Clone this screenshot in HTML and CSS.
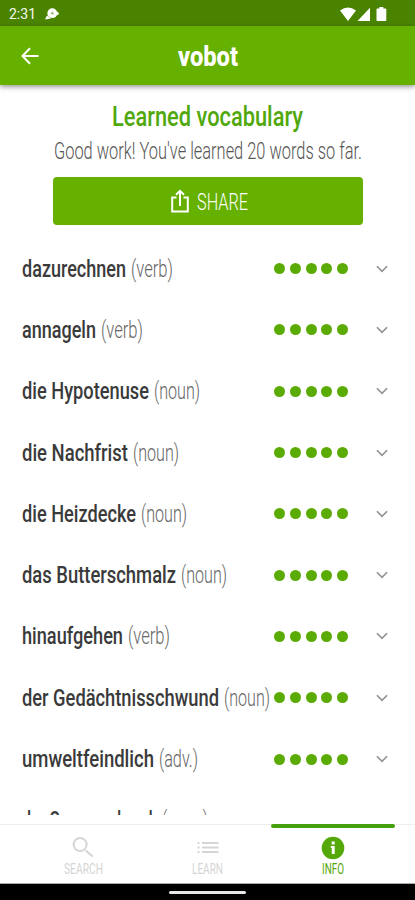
FILE: index.html
```html
<!DOCTYPE html>
<html lang="en">
<head>
    <meta charset="UTF-8">
    <meta name="viewport" content="width=device-width, initial-scale=1.0">
    <title>vobot</title>
    <link rel="stylesheet" href="styles.css">
</head>
<body>
    <div class="status-bar">
        <span class="clock">2:31</span>
        <svg class="notification" width="14" height="12" viewBox="0 0 14 12">
            <circle cx="7.300" cy="5.200" r="4.900"/>
            <circle cx="12" cy="5.500" r="1.800"/>
            <path d="M0 11.500 2 7.500l4 3z"/>
            <path class="notification-mark" d="M7.300 3.700v3M5.800 5.200h3"/>
        </svg>
        <svg class="signals" width="48" height="15" viewBox="0 0 48 15">
            <path d="M0 3.600Q8 -2.600 16 3.600L8 14z"/>
            <path d="M30 .8V14H17.500z"/>
            <path d="M39.300 0h4v1.500h2.200q.8 0 .8.800V13.200q0 .8-.8.800h-8.200q-.8 0-.8-.8V2.300q0-.8.8-.8h2z"/>
        </svg>
    </div>

    <header class="app-bar">
        <svg class="back" width="18" height="18" viewBox="0 0 18 18">
            <path d="M17.500 9H1.800M9 1.300 1.500 9 9 16.700"/>
        </svg>
        <svg class="line title" width="60" height="36">
            <text x="0" y="28" textLength="60" lengthAdjust="spacingAndGlyphs">vobot</text>
        </svg>
    </header>

    <main class="content">
        <svg class="line heading" width="192" height="34">
            <text x="0" y="26" textLength="191" lengthAdjust="spacingAndGlyphs">Learned vocabulary</text>
        </svg>
        <svg class="line summary" width="308" height="30">
            <text x="0" y="22" textLength="308" lengthAdjust="spacingAndGlyphs">Good work! You've learned 20 words so far.</text>
        </svg>
        <button class="share">
            <svg class="share-icon" width="18" height="24" viewBox="0 0 18 24">
                <path d="M5.500 8.500H1.200V22.500H16.800V8.500H12.500M9 17V2M5 5.800 9 1.800 13 5.800"/>
            </svg>
            <svg class="line share-label" width="51" height="30">
                <text x="0" y="24" textLength="51" lengthAdjust="spacingAndGlyphs">SHARE</text>
            </svg>
        </button>
        <ul class="word-list" id="word-list"></ul>
    </main>

    <nav class="tabs">
        <a class="tab">
            <svg class="tab-icon" width="24" height="24" viewBox="0 0 24 24">
                <path class="stroke" d="M14.500 14.500 21.800 20.500M15.600 8.500a6.500 6.500 0 1 1-13 0a6.500 6.500 0 1 1 13 0"/>
            </svg>
            <svg class="line tab-label" width="39" height="18">
                <text x="0" y="14" textLength="39" lengthAdjust="spacingAndGlyphs">SEARCH</text>
            </svg>
        </a>
        <a class="tab">
            <svg class="tab-icon" width="24" height="24" viewBox="0 0 24 24">
                <path d="M1.500 6h2v2h-2zM1.500 10.500h2v2h-2zM1.500 15h2v2h-2zM6 6h16.500v2H6zM6 10.500h16.500v2H6zM6 15h16.500v2H6z"/>
            </svg>
            <svg class="line tab-label" width="31" height="18">
                <text x="0" y="14" textLength="31" lengthAdjust="spacingAndGlyphs">LEARN</text>
            </svg>
        </a>
        <a class="tab active">
            <svg class="tab-icon" width="24" height="24" viewBox="0 0 24 24">
                <circle cx="12" cy="12" r="11.300"/>
                <path class="info-mark" d="M10.700 5.500h3v3h-3zM9.800 10h3.900v8h-2.900v-6h-1z"/>
            </svg>
            <svg class="line tab-label" width="22" height="18">
                <text x="0" y="14" textLength="22" lengthAdjust="spacingAndGlyphs">INFO</text>
            </svg>
        </a>
    </nav>

    <div class="system-bar"><span class="handle"></span></div>

    <script src="words.js"></script>
</body>
</html>
```
FILE: styles.css
```css
* {
    box-sizing: border-box;
}

body {
    margin: 0;
    height: 900px;
    display: flex;
    flex-direction: column;
    overflow: hidden;
    font-family: Roboto, sans-serif;
    background-color: #fff;
}

svg {
    display: block;
    flex: none;
}

.line {
    overflow: visible;
}

.status-bar {
    flex: none;
    height: 26px;
    display: flex;
    align-items: center;
    padding: 2px 27px 0 9px;
    background-color: #4a8300;
    color: #f4f8ee;
    fill: #fff;
}

.clock {
    width: 36px;
    font-size: 14px;
}

.notification-mark {
    stroke: #8fb35f;
    stroke-width: 1;
}

.signals {
    margin-left: auto;
}

.app-bar {
    flex: none;
    height: 59px;
    display: grid;
    grid-template-columns: 1fr auto 1fr;
    align-items: center;
    padding: 0 21px;
    background-color: #66b000;
    box-shadow: 0 2px 5px rgba(0, 0, 0, 0.4);
    z-index: 1;
}

.back {
    fill: none;
    stroke: #fff;
    stroke-width: 2;
}

.title {
    font-size: 28px;
    font-weight: 800;
    fill: #fff;
}

.content {
    flex: 1;
    min-height: 0;
    margin-bottom: 9px;
    overflow: hidden;
    display: flex;
    flex-direction: column;
    align-items: center;
    padding-top: 15px;
}

.heading {
    font-size: 28px;
    font-weight: 500;
    fill: #50a80c;
}

.summary {
    margin-top: 3px;
    font-size: 23px;
    font-weight: 300;
    fill: #555;
}

.share {
    flex: none;
    width: 310px;
    height: 48px;
    margin-top: 10px;
    padding: 0 0 0 3px;
    display: flex;
    align-items: center;
    justify-content: center;
    gap: 8px;
    border: 0;
    border-radius: 4px;
    background-color: #66b000;
}

.share-icon {
    fill: none;
    stroke: #fff;
    stroke-width: 2;
}

.share-label {
    font-size: 24px;
    font-family: Roboto, sans-serif;
    font-weight: 300;
    fill: #fff;
}

.word-list {
    width: 100%;
    margin: 13px 0 0;
    padding: 0;
    list-style-type: none;
}

.word-row {
    height: 61.3px;
    display: grid;
    grid-template-columns: 252px 74px 1fr;
    align-items: center;
    padding: 0 27px 0 22px;
}

.word {
    font-size: 24px;
    font-weight: 500;
    fill: #3a3a3a;
}

.word .kind {
    font-weight: 300;
    fill: #666;
}

.dots {
    display: flex;
    justify-content: space-between;
}

.dot {
    width: 11px;
    height: 11px;
    border-radius: 50%;
    background-color: #5bab05;
}

.chevron {
    justify-self: end;
    fill: none;
    stroke: #929292;
    stroke-width: 1.8;
}

.tabs {
    flex: none;
    height: 60px;
    display: grid;
    grid-template-columns: 1fr 1fr 1fr;
    padding: 0 20px 0 21px;
    border-top: 1px solid #eee;
    border-bottom: 1px solid #aaa;
}

.tab {
    display: flex;
    flex-direction: column;
    align-items: center;
    padding-top: 11px;
    color: #d5d5d5;
    fill: currentColor;
}

.tab.active {
    color: #55a80a;
}

/* indicator line lying over the top border of the tabs */
.tab.active::before {
    content: "";
    width: 124px;
    height: 4px;
    margin: -12px 0 8px;
    border-radius: 2px;
    background-color: #45a00d;
}

.tab.active .tab-icon {
    margin-bottom: -1px;
}

.tab.active .tab-label {
    margin-top: 1px;
}

.stroke {
    fill: none;
    stroke: currentColor;
    stroke-width: 2;
}

.info-mark {
    fill: #fff;
}

.tab-label {
    font-size: 15.5px;
    font-weight: 400;
}

.system-bar {
    flex: none;
    height: 16px;
    display: flex;
    justify-content: center;
    padding-top: 7px;
    background-color: #000;
}

.handle {
    width: 77px;
    height: 3px;
    border-radius: 2px;
    background-color: #e8e8e8;
}
```
FILE: words.js
```js
// word, kind, width of the word, width of the kind
const words = [
    ['dazurechnen', '(verb)', 104, 42],
    ['annageln', '(verb)', 74, 42],
    ['die Hypotenuse', '(noun)', 127, 46],
    ['die Nachfrist', '(noun)', 106, 46],
    ['die Heizdecke', '(noun)', 114, 46],
    ['das Butterschmalz', '(noun)', 154, 46],
    ['hinaufgehen', '(verb)', 101, 42],
    ['der Gedächtnisschwund', '(noun)', 197, 46],
    ['umweltfeindlich', '(adv.)', 132, 39],
    ['der Gaunerschreck', '(noun)', 135, 46]
];

const wordList = document.getElementById('word-list');

words.forEach(([word, kind, wordWidth, kindWidth]) => {
    const li = document.createElement('li');
    li.className = 'word-row';
    li.innerHTML = `
        <svg class="line word" width="250" height="32">
            <text x="0" y="24" textLength="${wordWidth}" lengthAdjust="spacingAndGlyphs">${word}</text>
            <text class="kind" x="${wordWidth + 5}" y="24" textLength="${kindWidth}" lengthAdjust="spacingAndGlyphs">${kind}</text>
        </svg>
        <div class="dots">${'<span class="dot"></span>'.repeat(5)}</div>
        <svg class="chevron" width="12" height="8" viewBox="0 0 13 8"><path d="M1 1l5.500 5.500L12 1"/></svg>
    `;
    wordList.appendChild(li);
});
```
